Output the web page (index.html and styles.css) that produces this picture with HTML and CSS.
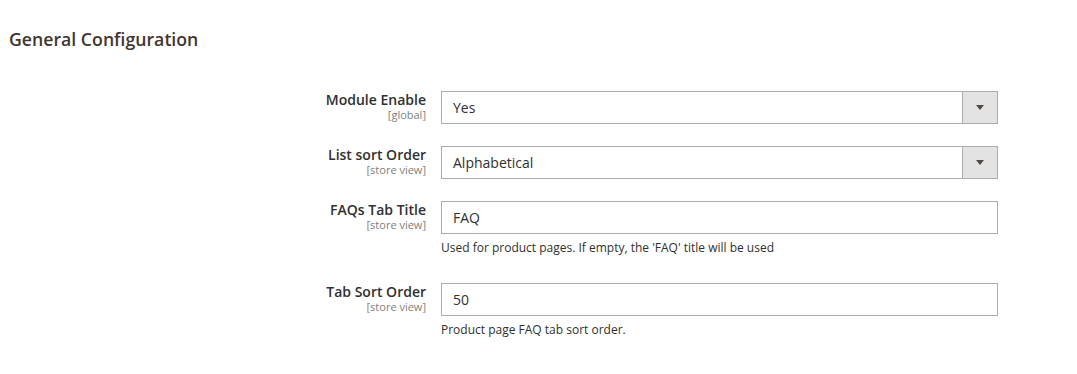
FILE: index.html
```html
<!DOCTYPE html>
<html lang="en">
<head>
    <meta charset="UTF-8">
    <meta name="viewport" content="width=device-width, initial-scale=1.0">
    <title>General Configuration</title>
    <link rel="stylesheet" href="styles.css">
</head>
<body>
    <div class="section">
        <h2 class="section-title">General Configuration</h2>

        <div class="config-row">
            <div class="label">
                <span class="label-text">Module Enable</span>
                <span class="scope">[global]</span>
            </div>
            <div class="value">
                <div class="select">
                    <span class="select-text">Yes</span>
                    <span class="select-arrow"><span class="caret"></span></span>
                </div>
            </div>
        </div>

        <div class="config-row">
            <div class="label">
                <span class="label-text">List sort Order</span>
                <span class="scope">[store view]</span>
            </div>
            <div class="value">
                <div class="select">
                    <span class="select-text">Alphabetical</span>
                    <span class="select-arrow"><span class="caret"></span></span>
                </div>
            </div>
        </div>

        <div class="config-row">
            <div class="label">
                <span class="label-text">FAQs Tab Title</span>
                <span class="scope">[store view]</span>
            </div>
            <div class="value">
                <div class="input">FAQ</div>
                <p class="note">Used for product pages. If empty, the 'FAQ' title will be used</p>
            </div>
        </div>

        <div class="config-row">
            <div class="label">
                <span class="label-text">Tab Sort Order</span>
                <span class="scope">[store view]</span>
            </div>
            <div class="value">
                <div class="input">50</div>
                <p class="note">Product page FAQ tab sort order.</p>
            </div>
        </div>
    </div>
</body>
</html>
```

FILE: styles.css
```css
:root {
    --text: #303030;
    --title: #41362f;
    --muted: #808080;
    --border: #adadad;
    --arrow-bg: #e3e3e3;
}

* {
    margin: 0;
    padding: 0;
    box-sizing: border-box;
}

body {
    background: #fff;
    color: var(--text);
    font-family: 'Open Sans', 'Liberation Sans', sans-serif;
    font-size: 14px;
}

.section {
    padding: 28px 0 0 9px;
}

.section-title {
    font-size: 17.7px;
    font-weight: 600;
    line-height: 22px;
    color: var(--title);
    margin-bottom: 41px;
}

.config-row {
    display: flex;
    gap: 15px;
    margin-bottom: 22px;
}

.label {
    width: 417px;
    display: flex;
    flex-direction: column;
    align-items: flex-end;
    text-align: right;
}

.label-text {
    font-weight: 600;
    line-height: 18px;
    color: var(--text);
}

.scope {
    font-size: 11px;
    line-height: 12px;
    color: var(--muted);
}

.value {
    width: 557px;
}

.select,
.input {
    height: 33px;
    border: 1px solid var(--border);
    background: #fff;
}

.select {
    display: flex;
}

.select-text,
.input {
    line-height: 31px;
    padding-left: 11px;
}

.select-text {
    flex: 1;
}

.select-arrow {
    width: 35px;
    background: var(--arrow-bg);
    border-left: 1px solid var(--border);
    display: flex;
    align-items: center;
    justify-content: center;
}

.caret {
    width: 0;
    height: 0;
    border-left: 4px solid transparent;
    border-right: 4px solid transparent;
    border-top: 5px solid #514943;
}

.note {
    font-size: 12px;
    line-height: 18px;
    padding: 5px 0 4px;
    color: var(--text);
}
```
